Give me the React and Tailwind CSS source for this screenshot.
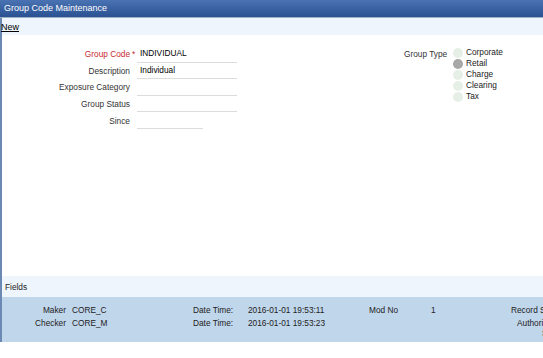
import React from "react";

const font = { fontFamily: '"Liberation Sans", Arial, sans-serif' };

function Row({ label, required, value, short }) {
  return (
    <div className="flex h-[16.6px] items-center">
      <div
        className={`w-[130px] text-right ${required ? "text-[#c8282e]" : "text-[#333]"}`}
      >
        {label}
      </div>
      <div className="w-[7px] text-center text-[#c8282e] leading-none">
        {required ? "*" : ""}
      </div>
      <div
        className={`${short ? "w-[66px]" : "w-[100px]"} h-[16.6px] border-b border-[#dcdcdc] pl-[3px] pt-[3px] text-black`}
      >
        {value}
      </div>
    </div>
  );
}

function Radio({ label, checked }) {
  return (
    <div className="flex h-[11px] items-center">
      <div
        className={`h-[10px] w-[10px] rounded-full ${checked ? "bg-[#a8a8a8]" : "bg-[#e6efe6]"}`}
      />
      <div className="ml-[3px] text-[#222]">{label}</div>
    </div>
  );
}

export default function App() {
  return (
    <div
      className="w-[543px] h-[358px] bg-white text-[8.3px] leading-none overflow-hidden"
      style={font}
    >
      <div className="h-[18px] bg-gradient-to-b from-[#4a73b3] to-[#2a5293] text-white text-[9px] flex items-center pl-[4px] border-b border-[#9fb0c4]">
        Group Code Maintenance
      </div>
      <div className="border-l-2 border-[#6c89b3] h-[324px] flex flex-col">
        <div className="h-[17px] bg-[#eef5fc] flex items-center pt-[1px]">
          <span className="underline text-black text-[9px] -ml-[1px]">New</span>
        </div>
        <div className="flex-1 flex">
          <div className="pt-[11px] w-[400px] -ml-[2px]">
            <Row label="Group Code" required value="INDIVIDUAL" />
            <Row label="Description" value="Individual" />
            <Row label="Exposure Category" value="" />
            <Row label="Group Status" value="" />
            <Row label="Since" value="" short />
          </div>
          <div className="pt-[12px] flex">
            <div className="text-[#333] pt-[3px] w-[49px] ml-[4px]">Group Type</div>
            <div>
              <Radio label="Corporate" />
              <Radio label="Retail" checked />
              <Radio label="Charge" />
              <Radio label="Clearing" />
              <Radio label="Tax" />
            </div>
          </div>
        </div>
        <div className="h-[21px] bg-[#eef5fc] flex items-center pl-[3px] pt-[1px] text-[#222]">
          Fields
        </div>
        <div className="h-[45px] bg-[#c0d6eb] text-[#222] relative">
          <div className="absolute left-[42px] top-[9px] flex flex-col items-end gap-[5px] w-[22px]">
            <span>Maker</span>
            <span>Checker</span>
          </div>
          <div className="absolute left-[70px] top-[9px] flex flex-col gap-[5px]">
            <span>CORE_C</span>
            <span>CORE_M</span>
          </div>
          <div className="absolute left-[191px] top-[9px] flex flex-col gap-[5px]">
            <span>Date Time:</span>
            <span>Date Time:</span>
          </div>
          <div className="absolute left-[246px] top-[9px] flex flex-col gap-[5px]">
            <span>2016-01-01 19:53:11</span>
            <span>2016-01-01 19:53:23</span>
          </div>
          <div className="absolute left-[367px] top-[9px]">Mod No</div>
          <div className="absolute left-[429px] top-[9px]">1</div>
          <div className="absolute left-[509px] top-[9px] whitespace-nowrap">Record Status</div>
          <div className="absolute left-[515px] top-[21px] flex flex-col items-end leading-[10px]">
            <span>Authorization</span>
            <span>Status</span>
          </div>
        </div>
      </div>
    </div>
  );
}
